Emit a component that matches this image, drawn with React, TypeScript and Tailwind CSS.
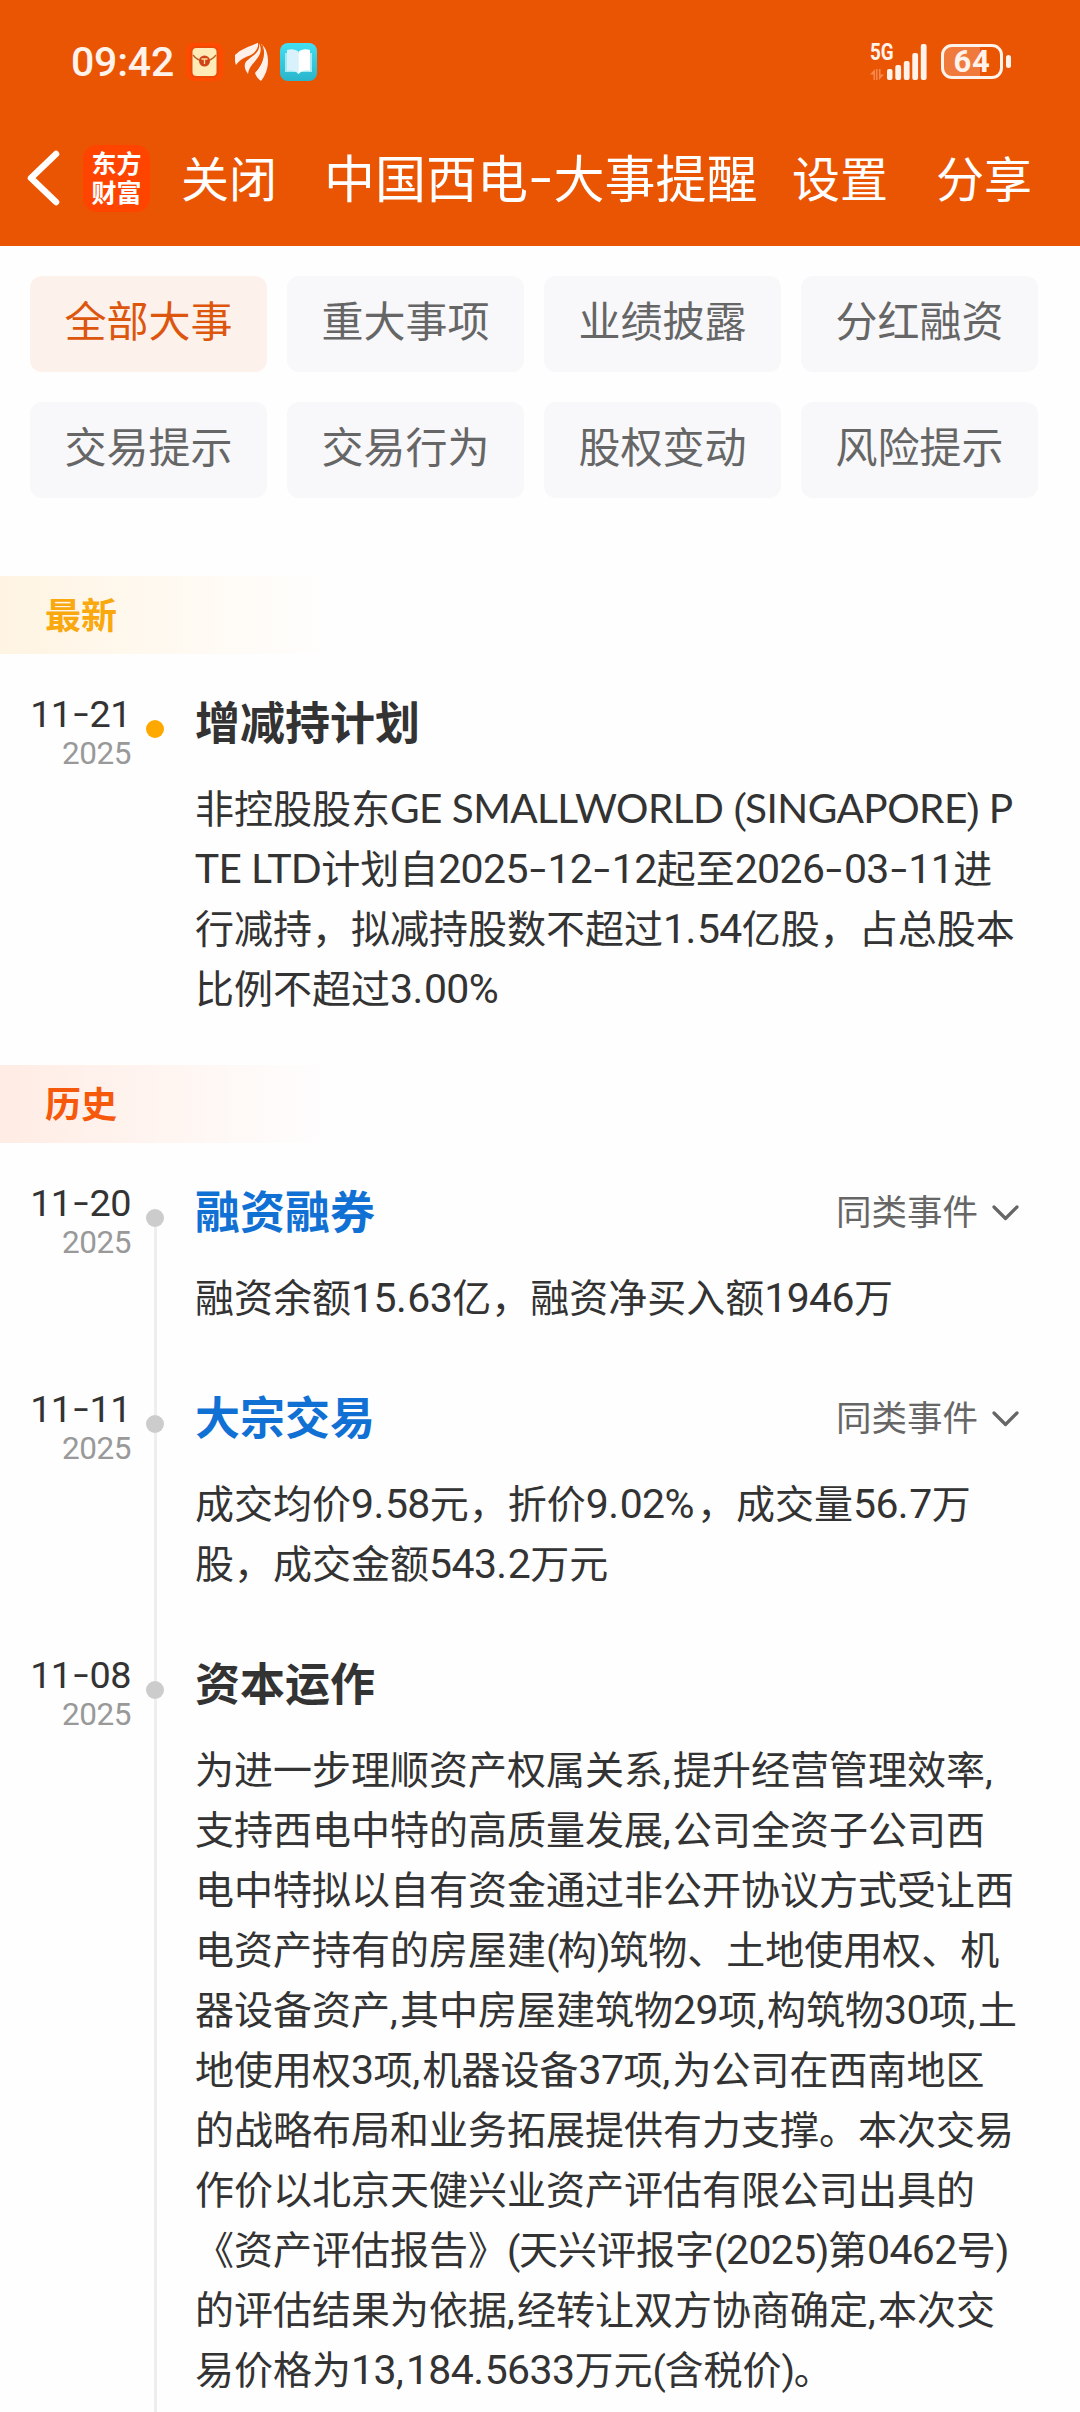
import { Fragment } from "react";

const tabs = [
  "全部大事",
  "重大事项",
  "业绩披露",
  "分红融资",
  "交易提示",
  "交易行为",
  "股权变动",
  "风险提示",
];

type Event = {
  date: string;
  year: string;
  title: string;
  link?: boolean;
  lines: string[];
};

const latest: Event = {
  date: "11-21",
  year: "2025",
  title: "增减持计划",
  lines: [
    "非控股股东GE SMALLWORLD (SINGAPORE) P",
    "TE LTD计划自2025-12-12起至2026-03-11进",
    "行减持，拟减持股数不超过1.54亿股，占总股本",
    "比例不超过3.00%",
  ],
};

const history: Event[] = [
  {
    date: "11-20",
    year: "2025",
    title: "融资融券",
    link: true,
    lines: ["融资余额15.63亿，融资净买入额1946万"],
  },
  {
    date: "11-11",
    year: "2025",
    title: "大宗交易",
    link: true,
    lines: ["成交均价9.58元，折价9.02%，成交量56.7万", "股，成交金额543.2万元"],
  },
  {
    date: "11-08",
    year: "2025",
    title: "资本运作",
    lines: [
      "为进一步理顺资产权属关系,提升经营管理效率,",
      "支持西电中特的高质量发展,公司全资子公司西",
      "电中特拟以自有资金通过非公开协议方式受让西",
      "电资产持有的房屋建(构)筑物、土地使用权、机",
      "器设备资产,其中房屋建筑物29项,构筑物30项,土",
      "地使用权3项,机器设备37项,为公司在西南地区",
      "的战略布局和业务拓展提供有力支撑。本次交易",
      "作价以北京天健兴业资产评估有限公司出具的",
      "《资产评估报告》(天兴评报字(2025)第0462号)",
      "的评估结果为依据,经转让双方协商确定,本次交",
      "易价格为13,184.5633万元(含税价)。",
    ],
  },
];

// Digits, capitals and hyphens each get their own face and spacing
function Mixed({ text }: { text: string }) {
  const runs =
    text.match(/-|[A-Z ]+|[0-9]+|[.%]|[()]|,|[^A-Z0-9 .%(),-]+/g) ?? [];
  return (
    <>
      {runs.map((run, i) => {
        if (run === "-") {
          return (
            <span
              key={i}
              className="inline-block w-[0.5em] -translate-y-[0.03em] scale-x-[1.5] text-center leading-none"
            >
              -
            </span>
          );
        }
        if (/^[A-Z ]+$/.test(run)) {
          return (
            <span
              key={i}
              className="font-['Lato'] text-[1.04em] leading-none tracking-[-0.014em]"
            >
              {run}
            </span>
          );
        }
        if (/^[0-9]+$/.test(run)) {
          return (
            <span
              key={i}
              className="text-[1.05em] leading-none tracking-[-0.014em]"
            >
              {run}
            </span>
          );
        }
        if (run === "." || run === "%") {
          return (
            <span
              key={i}
              className={`text-[1.05em] leading-none ${run === "%" ? "tracking-[0.06em]" : "tracking-[0.015em]"}`}
            >
              {run}
            </span>
          );
        }
        if (run === ",") {
          return (
            <span key={i} className="leading-none tracking-[0.06em]">
              ,
            </span>
          );
        }
        if (run === "(" || run === ")") {
          return (
            <span key={i} className="leading-none tracking-[-0.035em]">
              {run}
            </span>
          );
        }
        return <Fragment key={i}>{run}</Fragment>;
      })}
    </>
  );
}

function StatusBar() {
  return (
    <div className="flex h-[110px] items-center pt-[13px] pr-[69px] pl-[71px]">
      <span className="w-[104px] pt-[2px] text-[41px] leading-none font-medium tracking-[-0.005em] text-[#fff3ec]">
        09:42
      </span>
      <svg className="ml-[11px]" width="37" height="38" viewBox="0 0 37 38">
        <rect width="37" height="38" rx="8" fill="#ff4a00" />
        <rect x="4" y="3" width="29" height="32" rx="7" fill="#ea4a06" />
        <rect x="6.500" y="5" width="24" height="28" rx="4" fill="#ffeab8" />
        <path
          d="M7 12c3 4 7 6 11.500 6S27 16 30 12"
          fill="none"
          stroke="#b8622c"
          strokeWidth="1.300"
        />
        <circle cx="18.500" cy="18" r="5.500" fill="#cf4519" />
        <path
          d="M15.500 16h6M18.500 16v5"
          stroke="#ffe0a0"
          strokeWidth="1.300"
        />
      </svg>
      <svg className="ml-[12px]" width="33" height="38" viewBox="0 0 33 38">
        <g fill="#fff1ea">
          <path d="M0 12C5 7 12 4 18 2c2-1 4-2 5-2 1 4-2 9-7 12-5 2-11 4-15 10C0 19-1 15 0 12z" />
          <path d="M24 0c3 6 2 11-3 17-3 4-7 7-8 14-2-3-4-6-3-10 1-4 6-6 9-9 4-3 6-7 5-12z" />
          <path d="M26 1c4 2 7 9 7 17 0 8-3 15-7 20-3-2-5-5-6-8 4-5 7-9 8-15 1-6 0-10-2-14z" />
        </g>
        <path d="M27 2c3 8 2 16-6 26" fill="none" stroke="#ea5504" />
      </svg>
      <svg className="ml-[12px]" width="37" height="38" viewBox="0 0 37 38">
        <defs>
          <linearGradient id="reader" x1="0" y1="0" x2="0" y2="1">
            <stop offset="0" stopColor="#43dff2" />
            <stop offset="1" stopColor="#29b5cb" />
          </linearGradient>
        </defs>
        <rect width="37" height="38" rx="8" fill="url(#reader)" />
        <path d="M5 10h27v19H21l-2.500 2L16 29H5z" fill="#a5eaf2" />
        <path d="M7 7c4-1.500 9-1 11.500 2v22C16 27.500 11 27 7 28z" fill="#d9f1fb" />
        <path d="M30 7c-4-1.500-9-1-11.500 2v22c2.500-3.500 7.500-4 11.500-3z" fill="#fff" />
      </svg>

      <div className="ml-auto flex items-center">
        <div className="flex h-[36px] w-[57px] items-end">
          <div className="flex h-full w-[17px] shrink-0 flex-col justify-between">
            <span className="origin-left scale-x-[0.82] text-[23px] leading-[18px] font-bold text-[#fff3ec]">
              5G
            </span>
            <svg width="14" height="11" viewBox="0 0 14 11">
              <path
                d="M0 5.500L5 0v11H3.500V5.500zM14 5.500L9 11V0h1.500v5.500zM6 0h1.500v11H6z"
                fill="#f58a50"
              />
            </svg>
          </div>
          <svg width="40" height="36" viewBox="0 0 40 36" fill="#fff3ec">
            <rect x="0" y="25" width="5.500" height="11" rx="2" />
            <rect x="8.300" y="21" width="5.800" height="15" rx="2" />
            <rect x="16.800" y="17" width="5.800" height="19" rx="2" />
            <rect x="25.300" y="9" width="5.800" height="27" rx="2" />
            <rect x="33.800" y="0" width="5.800" height="36" rx="2" />
          </svg>
        </div>
        <div className="ml-[14px] flex h-[35px] w-[62px] items-center justify-center rounded-[11px] border-[3px] border-[#fff3ec] bg-linear-to-r from-[#f07a3c] from-65% to-transparent to-65% text-[31px] leading-none font-bold tracking-[0.02em] text-[#fff3ec]">
          64
        </div>
        <div className="ml-[3px] h-[13px] w-[5px] rounded-full bg-[#fff3ec]" />
      </div>
    </div>
  );
}

function NavBar() {
  return (
    <div className="flex h-[136px] items-center pl-[27px] text-[48px] leading-none whitespace-nowrap text-white">
      <svg width="33" height="56" viewBox="0 0 33 56" fill="none">
        <path
          d="M29 4L4 28l25 24"
          stroke="#fff"
          strokeWidth="6.500"
          strokeLinecap="round"
          strokeLinejoin="round"
        />
      </svg>
      <div className="ml-[23px] flex h-[67px] w-[67px] flex-col items-center justify-center rounded-[14px] bg-[#ff4400] pt-[2px] text-[25px] leading-[29px] font-bold">
        <span>东方</span>
        <span>财富</span>
      </div>
      <span className="ml-[31px] w-[96px] pt-[5px]">关闭</span>
      <h1 className="ml-[47px] w-[434px] pt-[5px] text-[51px]">
        <Mixed text="中国西电-大事提醒" />
      </h1>
      <span className="ml-[34px] w-[96px] pt-[5px]">设置</span>
      <span className="ml-[48px] w-[96px] pt-[5px]">分享</span>
    </div>
  );
}

function EventItem({
  event,
  active,
  first,
}: {
  event: Event;
  active?: boolean;
  first?: boolean;
}) {
  return (
    <article className="flex">
      <div className="w-[131px] shrink-0 pt-[9px] text-right">
        <div className="text-[36px] leading-[40px] text-[#333]">
          <Mixed text={event.date} />
        </div>
        <div className="text-[30px] leading-[37px] text-[#999]">
          <Mixed text={event.year} />
        </div>
      </div>

      {/* Timeline rail */}
      <div className="ml-[15px] flex w-[18px] shrink-0 flex-col items-center">
        <div className={`h-[34px] w-[3px] ${first ? "" : "bg-[#eee]"}`} />
        <div
          className={`h-[18px] w-[18px] rounded-full ${active ? "bg-[#ffa800]" : "bg-[#ccc]"}`}
        />
        {!active && <div className="w-[3px] flex-1 bg-[#eee]" />}
      </div>

      <div
        className={`ml-[31px] flex-1 ${active ? "pb-[45px]" : "pb-[52px]"}`}
      >
        <div className="flex h-[70px] items-center pt-[6px] pr-[60px]">
          <h2
            className={`text-[45px] leading-none font-bold ${event.link ? "text-[#1070d4]" : "text-[#333]"}`}
          >
            {event.title}
          </h2>
          {event.link && (
            <button className="ml-auto flex items-center text-[35.5px] leading-none text-[#666]">
              <span className="pt-[2px]">同类事件</span>
              <svg
                className="ml-[13px]"
                width="29"
                height="18"
                viewBox="0 0 29 18"
                fill="none"
              >
                <path
                  d="M3 3l11.500 11.500L26 3"
                  stroke="#666"
                  strokeWidth="3.200"
                  strokeLinecap="round"
                  strokeLinejoin="round"
                />
              </svg>
            </button>
          )}
        </div>
        <div className="mt-[24px] text-[39px] leading-[60px] whitespace-nowrap text-[#333]">
          {event.lines.map((line) => (
            <p key={line} className="h-[60px]">
              <Mixed text={line} />
            </p>
          ))}
        </div>
      </div>
    </article>
  );
}

export default function App() {
  return (
    <div className="h-[2412px] w-[1080px] overflow-hidden bg-[#fefefe] font-['Roboto','Noto_Sans_CJK_SC',sans-serif]">
      <header className="bg-[#ea5504]">
        <StatusBar />
        <NavBar />
      </header>

      <nav className="grid grid-cols-4 gap-x-5 gap-y-[30px] pt-[30px] pr-[42px] pl-[30px]">
        {tabs.map((tab, i) => (
          <button
            key={tab}
            className={`h-24 rounded-xl pb-[2px] text-[42px] leading-none ${i === 0 ? "bg-[#fdf1eb] text-[#dc560e]" : "bg-[#f8f8fa] text-[#666]"}`}
          >
            {tab}
          </button>
        ))}
      </nav>

      <section className="pt-[78px]">
        <div className="flex h-[78px] w-[334px] items-center bg-linear-to-r from-[#fff4e2] to-[#fefefe] pt-[4px] pl-[45px] text-[36px] leading-none font-bold text-[#faa80f]">
          最新
        </div>
        <div className="pt-[32px]">
          <EventItem event={latest} active first />
        </div>
      </section>

      <section>
        <div className="flex h-[78px] w-[334px] items-center bg-linear-to-r from-[#ffece4] to-[#fefefe] pt-[4px] pl-[45px] text-[36px] leading-none font-bold text-[#f6580c]">
          历史
        </div>
        <div className="pt-[32px]">
          {history.map((event, i) => (
            <EventItem key={event.date} event={event} first={i === 0} />
          ))}
        </div>
      </section>
    </div>
  );
}
